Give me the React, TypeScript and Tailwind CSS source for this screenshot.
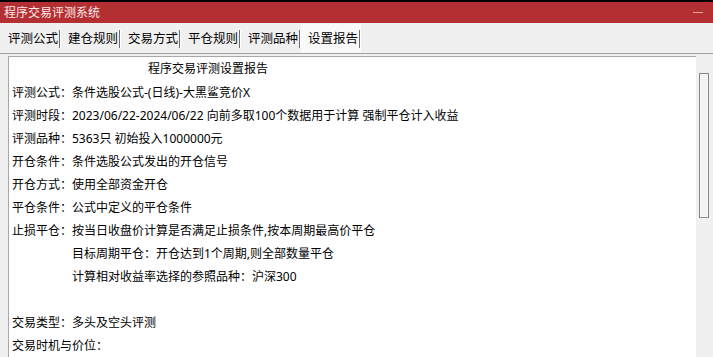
import React from 'react';

const tabs = ['评测公式', '建仓规则', '交易方式', '平仓规则', '评测品种', '设置报告'];

const rows: { label?: string; value?: string }[] = [
  { label: '评测公式：', value: '条件选股公式-(日线)-大黑鲨竞价X' },
  { label: '评测时段：', value: '2023/06/22-2024/06/22 向前多取100个数据用于计算 强制平仓计入收益' },
  { label: '评测品种：', value: '5363只 初始投入1000000元' },
  { label: '开仓条件：', value: '条件选股公式发出的开仓信号' },
  { label: '开仓方式：', value: '使用全部资金开仓' },
  { label: '平仓条件：', value: '公式中定义的平仓条件' },
  { label: '止损平仓：', value: '按当日收盘价计算是否满足止损条件,按本周期最高价平仓' },
  { value: '目标周期平仓：开仓达到1个周期,则全部数量平仓' },
  { value: '计算相对收益率选择的参照品种：沪深300' },
  {},
  { label: '交易类型：', value: '多头及空头评测' },
  { label: '交易时机与价位：' },
];

export default function App() {
  return (
    <div
      className="w-[713px] h-[357px] overflow-hidden flex flex-col bg-[#f0f0f0] text-black"
      style={{ fontFamily: '"Noto Sans", "Noto Sans CJK SC", sans-serif' }}
    >
      {/* title bar */}
      <div className="h-[2px] bg-black shrink-0" />
      <div className="h-[21px] shrink-0 bg-[#b42f32] flex items-center justify-between pl-[4px] pr-[10px]">
        <span className="text-[12px] leading-none text-[#fbeaea]">程序交易评测系统</span>
        <span className="w-[10px] h-px bg-[#f2a3a5]" />
      </div>

      {/* tabs */}
      <div className="h-[31px] shrink-0 flex items-end pl-[1px] border-b border-[#a0a0a0]">
        {tabs.map((t, i) => (
          <div
            key={t}
            className={`w-[60px] h-[29px] flex items-center ${i === tabs.length - 1 ? 'bg-[#f9f9f9]' : ''}`}
          >
            <span className="flex-1 pl-[7px] text-[12.5px] leading-none pt-[1px]">{t}</span>
            <span className="w-[2px] h-[18px] border-l border-[#6e6e6e] border-r border-r-white" />
          </div>
        ))}
      </div>

      {/* report */}
      <div className="flex-1 flex pl-[8px] pt-[2px] min-h-0">
        <div className="flex-1 bg-white border-l border-t border-[#a8a8a8] text-[12px] leading-[23px] min-w-0">
          <div className="pl-[139px] h-[24px]">程序交易评测设置报告</div>
          {rows.map((r, i) => (
            <div key={i} className="flex h-[23px] pl-[3px] whitespace-nowrap">
              <span className="w-[60px] shrink-0">{r.label ?? ''}</span>
              <span className={r.label && !r.value ? 'hidden' : ''}>{r.value ?? ''}</span>
            </div>
          ))}
        </div>
        {/* scrollbar */}
        <div className="w-[17px] shrink-0 bg-[#f0f0f0] pt-[17px] pl-[3px]">
          <div className="w-[10px] h-[145px] border border-[#8a8a8a] bg-[#f3f3f3]" />
        </div>
      </div>
    </div>
  );
}
